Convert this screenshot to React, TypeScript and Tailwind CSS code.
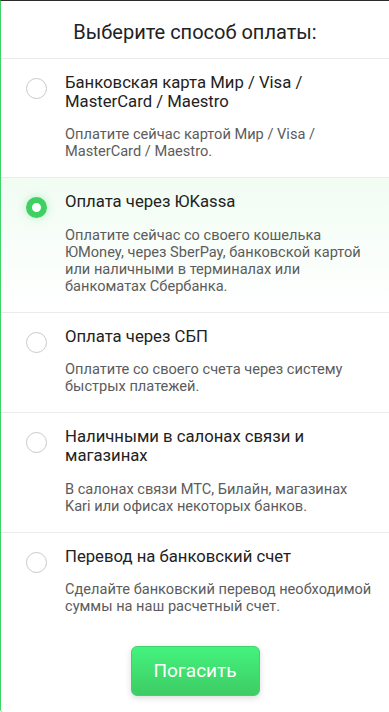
import React, { useState } from "react";

const methods = [
  {
    title: ["Банковская карта Мир / Visa /", "MasterCard / Maestro"],
    desc: ["Оплатите сейчас картой Мир / Visa /", "MasterCard / Maestro."],
  },
  {
    title: ["Оплата через ЮKassa"],
    desc: [
      "Оплатите сейчас со своего кошелька",
      "ЮMoney, через SberPay, банковской картой",
      "или наличными в терминалах или",
      "банкоматах Сбербанка.",
    ],
  },
  {
    title: ["Оплата через СБП"],
    desc: ["Оплатите со своего счета через систему", "быстрых платежей."],
  },
  {
    title: ["Наличными в салонах связи и", "магазинах"],
    desc: ["В салонах связи МТС, Билайн, магазинах", "Kari или офисах некоторых банков."],
  },
  {
    title: ["Перевод на банковский счет"],
    desc: ["Сделайте банковский перевод необходимой", "суммы на наш расчетный счет."],
  },
];

export default function App() {
  const [selected, setSelected] = useState(1);
  return (
    <div
      className="min-h-[712px] w-full bg-white border-t border-t-[#2b2b2b] border-l border-l-[#3ed467] rounded-bl-[3px] flex flex-col"
      style={{ fontFamily: "Roboto, 'Noto Sans', sans-serif" }}
    >
      <div className="pt-[19px] pb-[14px] text-center text-[20px] leading-[24px] text-[#222222]">
        Выберите способ оплаты:
      </div>
      <div className="flex flex-col">
        {methods.map((m, i) => {
          const active = i === selected;
          return (
            <div
              key={i}
              onClick={() => setSelected(i)}
              className={
                "flex items-start border-t border-t-[#ebebeb] pt-[15px] pb-[17px] pl-[25px] pr-[4px] cursor-pointer " +
                (active ? "bg-gradient-to-b from-[#f1fcf3] to-white" : "")
              }
            >
              <div className="w-[39px] shrink-0 pt-[4px]">
                {active ? (
                  <div className="w-[21px] h-[21px] rounded-full border-[6.5px] border-[#3fd064] bg-white shadow-[0_0_8px_rgba(63,208,100,0.35)]" />
                ) : (
                  <div className="w-[21px] h-[21px] rounded-full border border-[#c9c9c9] bg-white" />
                )}
              </div>
              <div className="flex flex-col min-w-0 flex-1">
                <div className="text-[16.7px] leading-[18.6px] text-[#222222]">
                  {m.title.map((t, k) => (
                    <span key={k} className="block whitespace-nowrap">{t}</span>
                  ))}
                </div>
                <div className="mt-[15px] text-[14.6px] leading-[17px] text-[#5c5c5c]">
                  {m.desc.map((t, k) => (
                    <span key={k} className="block whitespace-nowrap">{t}</span>
                  ))}
                </div>
              </div>
            </div>
          );
        })}
      </div>
      <div className="flex justify-center pt-[14px]">
        <button className="w-[129px] h-[50px] rounded-[6px] border border-[#3dd56b] bg-gradient-to-b from-[#44f37d] to-[#3dcc64] text-white text-[19px] shadow-[0_2px_6px_rgba(0,0,0,0.15)]">
          Погасить
        </button>
      </div>
    </div>
  );
}
